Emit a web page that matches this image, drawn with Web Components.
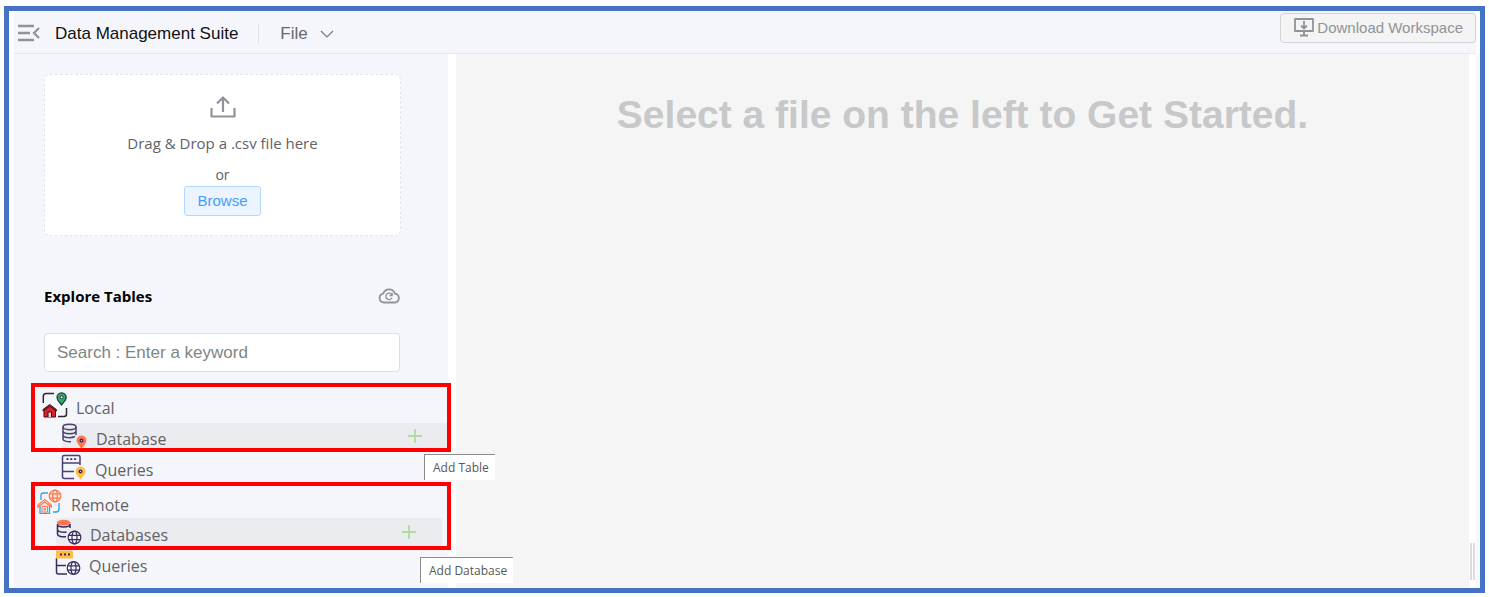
<!DOCTYPE html>
<html lang="en">
<head>
<meta charset="utf-8">
<title>Data Management Suite</title>
<style>
html, body { margin: 0; background: #fff; }
body { font-family: "Open Sans", "Noto Sans", sans-serif; color: #606266; }
</style>
</head>
<body>
<data-suite></data-suite>
<script>
const define = (name, html, setup) => {
  const template = document.createElement('template');
  template.innerHTML = html;
  customElements.define(name, class extends HTMLElement {
    constructor() {
      super();
      this.attachShadow({ mode: 'open' }).append(template.content.cloneNode(true));
    }
    connectedCallback() { if (setup) setup(this, this.shadowRoot); }
  });
};

const globe = (x, y, r, color, fill) => `<g transform="translate(${x} ${y})" fill="none" stroke="${color}" stroke-width="1.2"><circle r="${r}" fill="${fill}"/><ellipse rx="${r * .4}" ry="${r}"/><path d="M${-r * .9} ${-r * .35}H${r * .9}M${-r * .9} ${r * .35}H${r * .9}"/></g>`;
const smallPin = (fill) => `<path d="M19.500 25.500c-2-2.500-5-5.200-5-8a5 5 0 0 1 10 0c0 2.800-3 5.500-5 8z" fill="${fill}"/><circle cx="19.500" cy="17.500" r="1.300" fill="#fff" stroke="#382b63" stroke-width="1.500"/>`;

const icons = {
  menu: [24, 24, `<path d="M0 4h16M0 11h12M0 18h16M21 6l-5 5 5 5" fill="none" stroke="#909399" stroke-width="2.300"/>`],
  chevron: [14, 14, `<path d="M1 4l6 6 6-6" fill="none" stroke="#77797d" stroke-width="1.200"/>`],
  monitor: [22, 22, `<path d="M2 2h18v12H2zM11 4v7M8 8.500l3 3 3-3M11 14v4M7 18.500h8" fill="none" stroke="#909399" stroke-width="1.800" stroke-linejoin="round"/>`],
  upload: [26, 26, `<path d="M1.500 14v8.500h23V14M13 18V4M7 9.500l6-6 6 6" fill="none" stroke="#909399" stroke-width="2.200" stroke-linejoin="round"/>`],
  cloud: [22, 22, `<g fill="none" stroke="#909399" stroke-width="1.800"><path d="M6 17.500a4.500 4.500 0 0 1-.8-8.900 6.200 6.200 0 0 1 11.800 0A4.500 4.500 0 0 1 17 17.500z"/><path d="M13.800 9.700a3.200 3.200 0 1 0 .2 3M14.200 7.800v2.700h-2.700" stroke-width="1.300"/></g>`],
  plus: [16, 16, `<path d="M8 1v14M1 8h14" stroke="#b3dba0" stroke-width="1.800"/>`],
  local: [26, 26, `<path d="M1.300 11V4.500q0-3 3-3H12M24.500 16v6q0 2.500-2.500 2.500h-6" fill="none" stroke="#292831" stroke-width="1.500"/>
    <path d="M19.500 13c-1.500-2.300-4.500-4.300-4.500-7.500a4.600 4.600 0 0 1 9.200 0c0 3.200-3.200 5.200-4.700 7.500z" fill="#36a673" stroke="#17382a" stroke-width="1.200"/><circle cx="19.600" cy="5.300" r="1.500" fill="#fff" stroke="#17382a"/>
    <path d="M2 18v7h11.500V18L7.700 13.500z" fill="#e0202f" stroke="#3b1016"/><path d="M1 19v-1.500l6.700-5 6.700 5V19l-6.700-4.800z" fill="#e0202f" stroke="#3b1016"/><path d="M6 25v-5h3.500v5" fill="#f0c8cb" stroke="#3b1016"/>`],
  database: [26, 26, `<g fill="none" stroke="#49406f" stroke-width="1.500"><ellipse cx="7.500" cy="4" rx="6.500" ry="2.700"/><path d="M1 4v12c0 2 3.500 2.800 8 2.700M14 4v8M1 8c0 3.600 13 3.600 13 0M1 12c0 3 8 3.500 12 1.500"/></g>${smallPin('#ff754d')}`],
  queries: [26, 26, `<path d="M13 24.500H3.500q-2 0-2-2V3q0-1.500 1.500-1.500h14.500q1.500 0 1.500 1.500v8M1.500 9h17.500M1.500 17.500H13" fill="none" stroke="#49406f" stroke-width="1.500"/><path d="M5.500 5.200h2M9.300 5.200h2M13.100 5.200h2" stroke="#382b63" stroke-width="1.800"/>${smallPin('#ffc044')}`],
  remote: [26, 26, `<path d="M4 11V6.500Q4 4 6.500 4H11M22 14v6q0 3-3 3h-3" fill="none" stroke="#409fe0" stroke-width="1.400"/>
    ${globe(18, 7, 5.8, '#ff7446', '#ffe9e0')}
    <path d="M3 16v8.300h9.500V16" fill="#e4f3ff" stroke="#409fe0" stroke-width="1.300"/><path d="M1 18v-2l6.700-5.500 6.700 5.500v2l-6.700-5z" fill="#fff" stroke="#ff7446" stroke-width="1.200"/><path d="M5 17.500h5.500V23H5zM7 19.500h1.500V21H7z" fill="none" stroke="#ff7446"/>`],
  databases: [26, 26, `<g fill="none" stroke="#382b63" stroke-width="1.500"><path d="M1.500 6v9c0 2 3 3 8.500 2.700M1.500 10.500c0 2.500 5 3 9 2.500M1.500 5c0 4 12.500 4 12.500 0v4"/></g><ellipse cx="7.700" cy="3.700" rx="6.900" ry="2.900" fill="#ff754d"/>${globe(18.5, 18.5, 6.3, '#382b63', '#f5f6fb')}`],
  remoteQueries: [26, 26, `<path d="M1.500 8v14q0 2 2 2H12M1.500 15.500H11" fill="none" stroke="#382b63" stroke-width="1.500"/><path d="M1 .5h15q2 0 2 2V8.500H1z" fill="#ffbd48"/><path d="M5 4.500h2M9 4.500h2M13 4.500h2" stroke="#382b63" stroke-width="1.800"/>${globe(18.5, 18, 6.3, '#382b63', '#f5f6fb')}`]
};

define('ui-icon', `<style>:host { display: block; flex: none; } svg { display: block; }</style>`, (el, root) => {
  if (root.querySelector('svg')) return;
  const [w, h, body] = icons[el.getAttribute('name')];
  root.innerHTML += `<svg width="${w}" height="${h}" viewBox="0 0 ${w} ${h}" aria-hidden="true">${body}</svg>`;
});

define('top-bar', `<style>
:host { display: flex; align-items: center; height: 39px; margin: 0 4px 0 5px; padding: 3px 0 0 4px; background: #f5f6fb; border-bottom: 1px solid #e6e8ec; font-family: "Liberation Sans", Arial, sans-serif; }
button { font: inherit; color: inherit; background: none; border: 0; padding: 0; display: flex; align-items: center; }
h1 { margin: 0 20px 0 13px; font-size: 17px; line-height: 24px; font-weight: 400; color: #111; }
.file { gap: 12px; padding-left: 21px; height: 20px; border-left: 1px solid #e2e4e9; font-size: 17px; color: #66686d; }
.download { box-sizing: border-box; height: 30px; margin-left: auto; margin-bottom: 12px; padding: 0 12px; gap: 2px; border: 1px solid #d3d4d6; border-radius: 4px; background: #f4f4f5; color: #909399; font-size: 15px; }
</style>
<button aria-label="Collapse menu"><ui-icon name="menu"></ui-icon></button>
<h1>Data Management Suite</h1>
<button class="file" aria-haspopup="menu">File <ui-icon name="chevron"></ui-icon></button>
<button class="download"><ui-icon name="monitor"></ui-icon>Download Workspace</button>`);

define('upload-card', `<style>
:host { display: flex; flex-direction: column; align-items: center; padding: 19px 0; border: 1px dashed #e1e4ea; border-radius: 6px; background: #fff; }
p { margin: 11px 0 9px; font-size: 15px; line-height: 24px; }
span { font-size: 14px; line-height: 22px; }
button { height: 30px; padding: 0 12px 2px; border: 1px solid #b3d8ff; border-radius: 3px; background: #ecf5ff; color: #409eff; font: 15px "Liberation Sans", Arial, sans-serif; }
</style>
<ui-icon name="upload"></ui-icon>
<p>Drag &amp; Drop a .csv file here</p>
<span>or</span>
<button>Browse</button>`);

define('table-search', `<style>
:host { display: block; }
header { display: flex; align-items: center; justify-content: space-between; }
h2 { margin: 0; font-size: 15px; line-height: 24px; font-weight: 700; color: #000; }
button { padding: 0; border: 0; background: none; }
input { box-sizing: border-box; display: block; width: 100%; height: 39px; margin-top: 25px; padding: 0 12px; border: 1px solid #dcdfe6; border-radius: 4px; background: #fff; font: 17px "Liberation Sans", Arial, sans-serif; }
input::placeholder { color: #7d8783; opacity: 1; }
</style>
<header><h2>Explore Tables</h2><button aria-label="Reload tables"><ui-icon name="cloud"></ui-icon></button></header>
<input type="search" aria-label="Search tables" placeholder="Search : Enter a keyword">`);

define('tree-row', `<style>
:host { display: flex; align-items: center; gap: 8px; box-sizing: border-box; height: 30px; font-size: 16px; line-height: 24px; }
:host([active]) { background: #ebecf0; }
span { padding-top: 6px; }
.end { margin-left: auto; }
</style>
<slot name="icon"></slot><span><slot></slot></span><div class="end"><slot name="action"></slot></div>`);

define('add-button', `<style>
:host { display: block; position: relative; }
button { display: block; padding: 0; border: 0; background: none; }
[role=tooltip] { position: absolute; z-index: 2; top: 26px; left: 17px; padding: 0 6px 0 8px; border: solid #8c8c8c; border-width: 1px 0 0 1px; background: #fff; color: #575757; font-size: 12px; line-height: 25px; white-space: nowrap; }
:host([far]) [role=tooltip] { top: 33px; left: 19px; }
</style>
<button aria-labelledby="tip"><ui-icon name="plus"></ui-icon></button>
<div role="tooltip" id="tip"><slot></slot></div>`);

define('table-tree', `<style>
:host { display: block; }
section { border: 4px solid #f00; }
.root { height: 36px; padding-left: 7px; }
.child { margin-left: 27px; }
.local .child { height: 25px; padding-right: 24px; }
.remote .root { height: 32px; padding-left: 2px; }
.remote .child { height: 28px; margin: 0 5px 0 21px; padding-right: 25px; }
.query { margin-left: 30px; height: 30px; }
.remote-query { margin-left: 24px; height: 26px; }
</style>
<section class="local">
  <tree-row class="root"><ui-icon slot="icon" name="local"></ui-icon>Local</tree-row>
  <tree-row class="child" active><ui-icon slot="icon" name="database"></ui-icon>Database<add-button slot="action">Add Table</add-button></tree-row>
</section>
<tree-row class="query"><ui-icon slot="icon" name="queries"></ui-icon>Queries</tree-row>
<section class="remote">
  <tree-row class="root"><ui-icon slot="icon" name="remote"></ui-icon>Remote</tree-row>
  <tree-row class="child" active><ui-icon slot="icon" name="databases"></ui-icon>Databases<add-button slot="action" far>Add Database</add-button></tree-row>
</section>
<tree-row class="remote-query"><ui-icon slot="icon" name="remoteQueries"></ui-icon>Queries</tree-row>`);

define('side-panel', `<style>
:host { display: block; flex: 0 0 434px; box-sizing: border-box; padding-top: 20px; background: #f5f6fb; }
upload-card { margin: 0 47px 0 30px; }
table-search { margin: 48px 48px 11px 30px; }
table-tree { margin: 0 -3px 0 17px; position: relative; z-index: 1; }
</style>
<upload-card></upload-card>
<table-search></table-search>
<table-tree></table-tree>`);

define('work-area', `<style>
:host { display: block; flex: 1; background: #f5f5f5; text-align: center; }
h2 { margin: 36px 0 0; font: bold 39px/50px "Liberation Sans", Arial, sans-serif; color: #c6c8ca; }
</style>
<h2>Select a file on the left to Get Started.</h2>`);

define('data-suite', `<style>
:host { display: flex; flex-direction: column; box-sizing: border-box; min-height: calc(100vh - 10px); margin: 6px 4px 4px; border: 5px solid #4472c4; background: #fff; }
main { flex: 1; display: flex; padding-left: 5px; }
work-area { margin-left: 8px; }
.edge { display: flex; align-items: flex-end; box-sizing: border-box; width: 11px; padding: 0 1px 8px; border-right: 4px solid #f7f8fa; }
.grip { box-sizing: border-box; flex: none; width: 5px; height: 37px; border: solid #dcdcdc; border-width: 0 2px; }
</style>
<top-bar></top-bar>
<main><side-panel></side-panel><work-area></work-area><div class="edge"><div class="grip"></div></div></main>`);
</script>
</body>
</html>
